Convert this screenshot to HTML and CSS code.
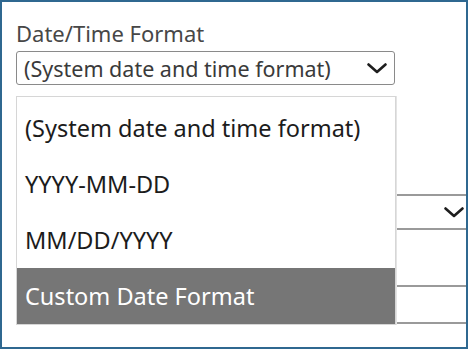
FILE: index.html
```html
<!DOCTYPE html>
<html lang="en">
<head>
  <meta charset="UTF-8" />
  <title>Date/Time Format</title>
  <link rel="stylesheet" href="styles.css">
</head>
<body>
  <div class="frame">
    <div class="field">
      <div class="label">Date/Time Format</div>
      <div class="select">
        <span>(System date and time format)</span>
        <svg class="chevron" width="20" height="11" viewBox="0 0 20 11"><polyline points="1.5,1.5 10,9 18.5,1.5" /></svg>
      </div>
    </div>

    <div class="select wide">
      <span></span>
      <svg class="chevron" width="20" height="11" viewBox="0 0 20 11"><polyline points="1.5,1.5 10,9 18.5,1.5" /></svg>
    </div>
    <div class="input wide"></div>

    <ul class="menu">
      <li>(System date and time format)</li>
      <li>YYYY-MM-DD</li>
      <li>MM/DD/YYYY</li>
      <li class="active">Custom Date Format</li>
    </ul>
  </div>
</body>
</html>
```

FILE: styles.css
```css
* { box-sizing: border-box; }
body { margin: 0; font-family: "Noto Sans", sans-serif; background: #fff; }

.frame {
  width: 468px; height: 349px;
  border: 2px solid #2f6890;
  padding: 17px 0 0 14px;
  overflow: hidden;
  position: relative;
}
.label {
  font-size: 22px; line-height: 28px;
  color: #474747;
  margin-bottom: 4px;
}
.select {
  width: 379px; height: 34px;
  border: 1px solid #8a8a8a; border-radius: 3px;
  display: flex; align-items: center; justify-content: space-between;
  padding: 0 7px 0 7px;
  font-size: 21.5px; color: #3a3a3a;
}
.chevron polyline {
  fill: none; stroke: #1e1e1e; stroke-width: 2.6;
  stroke-linecap: round; stroke-linejoin: round;
}
.wide { width: 455px; border-radius: 0; }
.select.wide {
  height: 36px; margin-top: 109px;
  border: none; border-top: 2px solid #9a9a9a; border-bottom: 2px solid #9a9a9a;
}
.input.wide {
  height: 39px; margin-top: 55px;
  border-top: 2px solid #9a9a9a; border-bottom: 2px solid #9a9a9a;
}

.menu {
  position: absolute; top: 94px; left: 14px;
  width: 380px;
  margin: 0; padding: 3px 0 0 0;
  list-style: none;
  background: #fff;
  border: 1px solid #d6d6d6;
  box-shadow: 1px 0 0 #e4e4e4;
}
.menu li {
  height: 56px; line-height: 56px;
  padding-left: 8px;
  font-size: 23.5px; color: #1c1c1c;
}
.menu li.active { background: #767676; color: #fff; }
```
